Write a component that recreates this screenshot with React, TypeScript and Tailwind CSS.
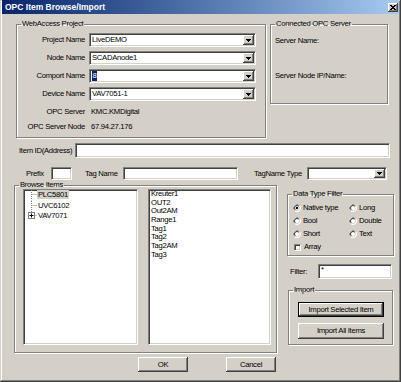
import React from "react";

const SUNKEN =
  "bg-white border border-t-[#808080] border-l-[#808080] border-b-white border-r-white shadow-[inset_1px_1px_#404040,inset_-1px_-1px_#d4d0c8]";
const BTN =
  "bg-[#d4d0c8] shadow-[inset_-1px_-1px_#404040,inset_1px_1px_#fff,inset_-2px_-2px_#808080]";
const GROUP =
  "border border-[#808080] shadow-[inset_1px_1px_#fff,1px_1px_#fff]";

function Arrow() {
  return (
    <svg width="5" height="3" viewBox="0 0 5 3" shapeRendering="crispEdges">
      <path d="M0 0h5v1h-1v1h-1v1h-1v-1h-1v-1h-1z" fill="#000" />
    </svg>
  );
}

function Combo({ className, children }: { className: string; children?: React.ReactNode }) {
  return (
    <div className={`${SUNKEN} ${className} flex items-stretch p-[1px]`}>
      <div className="flex-1 flex items-center pl-[1px] overflow-hidden whitespace-nowrap">{children}</div>
      <div className={`${BTN} w-[11px] flex items-center justify-center`}>
        <Arrow />
      </div>
    </div>
  );
}

function Radio({ checked }: { checked?: boolean }) {
  return (
    <svg width="8" height="8" viewBox="0 0 8 8" className="shrink-0">
      <circle cx="4" cy="4" r="3.5" fill="#fff" stroke="#ffffff" strokeWidth="1" />
      <path d="M1.53 6.47A3.5 3.5 0 0 1 6.47 1.53" fill="none" stroke="#808080" strokeWidth="1" />
      <circle cx="4" cy="4" r="2.5" fill="#fff" stroke="#d4d0c8" strokeWidth="1" />
      <path d="M2.23 5.77A2.5 2.5 0 0 1 5.77 2.23" fill="none" stroke="#404040" strokeWidth="1" />
      {checked && <circle cx="4" cy="4" r="1.2" fill="#000" />}
    </svg>
  );
}

function TreeRow({
  label,
  last,
  plus,
  selected,
}: {
  label: string;
  last?: boolean;
  plus?: boolean;
  selected?: boolean;
}) {
  return (
    <div className="flex h-[10.5px] items-start">
      <svg width="13" height="10.5" viewBox="0 0 13 10.5" className="shrink-0">
        <line x1="7.5" y1="0" x2="7.5" y2={last ? 4.5 : 10.5} stroke="#808080" strokeDasharray="1 1" />
        <line x1="7.5" y1="4.5" x2="13" y2="4.5" stroke="#808080" strokeDasharray="1 1" />
        {plus && (
          <>
            <rect x="4.5" y="1.5" width="6" height="6" fill="#fff" stroke="#808080" />
            <path d="M5.5 4.5h4M7.5 2.5v4" stroke="#000" />
          </>
        )}
      </svg>
      <span className={selected ? "h-[9px] leading-[9px] px-[1px] bg-[#d4d0c8]" : "h-[9px] leading-[9px] px-[1px]"}>
        {label}
      </span>
    </div>
  );
}

function Button({ className, children, isDefault }: { className: string; children: React.ReactNode; isDefault?: boolean }) {
  return (
    <div
      className={
        isDefault
          ? `${className} border border-black bg-[#d4d0c8] shadow-[inset_-1px_-1px_#404040,inset_1px_1px_#fff,inset_-2px_-2px_#808080] flex items-center justify-center whitespace-nowrap`
          : `${className} ${BTN} flex items-center justify-center whitespace-nowrap`
      }
    >
      {children}
    </div>
  );
}

export default function App() {
  const tags = ["Kreuter1", "OUT2", "Out2AM", "Range1", "Tag1", "Tag2", "Tag2AM", "Tag3"];
  return (
    <div className="w-[401px] h-[382px] bg-[#d4d0c8] flex flex-col overflow-hidden text-black text-[7.7px] tracking-[-0.3px] leading-[10px] font-[family-name:'Liberation_Sans',Arial,sans-serif] shadow-[inset_-1px_-1px_#404040,inset_1px_1px_#d4d0c8,inset_-2px_-2px_#808080,inset_2px_2px_#fff]">
      {/* Title bar */}
      <div className="mx-[2px] h-[14px] shrink-0 flex items-center justify-between bg-linear-to-r from-[#0a246a] to-[#a6caf0] pl-[3px] pr-[1px]">
        <span className="text-white font-bold text-[8.5px] tracking-normal">
          OPC Item Browse/Import
        </span>
        <div className={`${BTN} w-[10px] h-[9px] flex items-center justify-center`}>
          <svg width="6" height="5" viewBox="0 0 6 5" shapeRendering="crispEdges">
            <path d="M0 0h2v1h2v-1h2v1h-1v1h-1v1h1v1h1v1h-2v-1h-2v1h-2v-1h1v-1h1v-1h-1v-1h-1z" fill="#000" />
          </svg>
        </div>
      </div>

      {/* Row 1: groups */}
      <div className="flex mt-[6px] shrink-0">
        <fieldset className={`${GROUP} ml-[16px] w-[250px] h-[118px]`}>
          <legend className="ml-[4px] px-[1px] leading-[8px]">WebAccess Project</legend>
          <div className="pt-[5px] grid grid-cols-[68px_167px] gap-x-[4px] gap-y-[4px] items-center">
            <span className="text-right whitespace-nowrap">Project Name</span>
            <Combo className="w-[167px] h-[14px]">LiveDEMO</Combo>
            <span className="text-right whitespace-nowrap">Node Name</span>
            <Combo className="w-[167px] h-[14px]">SCADAnode1</Combo>
            <span className="text-right whitespace-nowrap">Comport Name</span>
            <Combo className="w-[167px] h-[14px]">
              <span className="bg-[#0a246a] text-white px-[0.5px]">8</span>
            </Combo>
            <span className="text-right whitespace-nowrap">Device Name</span>
            <Combo className="w-[167px] h-[14px]">VAV7051-1</Combo>
          </div>
          <div className="mt-[6px] grid grid-cols-[68px_auto] gap-x-[6px]">
            <span className="text-right whitespace-nowrap">OPC Server</span>
            <span>KMC.KMDigital</span>
          </div>
          <div className="mt-[5px] grid grid-cols-[68px_auto] gap-x-[6px]">
            <span className="text-right whitespace-nowrap">OPC Server Node</span>
            <span>67.94.27.176</span>
          </div>
        </fieldset>

        <fieldset className={`${GROUP} ml-[4px] w-[118px] h-[84px]`}>
          <legend className="ml-[4px] px-[1px] leading-[8px]">Connected OPC Server</legend>
          <div className="pl-[4px] pt-[8px] flex flex-col">
            <span>Server Name:</span>
            <span className="mt-[25px]">Server Node IP/Name:</span>
          </div>
        </fieldset>
      </div>

      {/* Row 2: Item ID */}
      <div className="flex items-center mt-[5px] shrink-0">
        <span className="ml-[19px] w-[56px] whitespace-nowrap">Item ID(Address)</span>
        <div className={`${SUNKEN} w-[315px] h-[15px]`} />
      </div>

      {/* Row 3: prefix / tag name */}
      <div className="flex items-center mt-[9px] h-[13px] shrink-0">
        <span className="ml-[26px] w-[25px]">Prefix</span>
        <div className={`${SUNKEN} w-[21px] h-[13px]`} />
        <span className="ml-[13px] w-[38px] whitespace-nowrap">Tag Name</span>
        <div className={`${SUNKEN} w-[115px] h-[13px]`} />
        <span className="ml-[16px] w-[53px] whitespace-nowrap">TagName Type</span>
        <Combo className="w-[80px] h-[13px]" />
      </div>

      {/* Row 4 */}
      <div className="flex mt-[1px] shrink-0">
        <fieldset className={`${GROUP} ml-[14px] w-[263px] h-[172px]`}>
          <legend className="ml-[4px] px-[1px] leading-[8px]">Browse Items</legend>
          <div className="flex">
            <div className={`${SUNKEN} ml-[8px] w-[115px] h-[156px] flex flex-col`}>
              <TreeRow label="PLC5801" selected />
              <TreeRow label="UVC6102" />
              <TreeRow label="VAV7071" last plus />
            </div>
            <div className={`${SUNKEN} ml-[10px] w-[123px] h-[156px] pl-[2px] flex flex-col leading-[8.7px]`}>
              {tags.map((t) => (
                <span key={t} className="h-[8.7px] leading-[8.7px] whitespace-nowrap">
                  {t}
                </span>
              ))}
            </div>
          </div>
        </fieldset>

        <div className="ml-[10px] w-[107px] flex flex-col">
          <fieldset className={`${GROUP} mt-[9px] w-[107px] h-[66px]`}>
            <legend className="ml-[4px] px-[1px] leading-[8px]">Data Type Filter</legend>
            <div className="pl-[5px] pt-[5px] grid grid-cols-[56px_auto] auto-rows-[10px] gap-y-[3px]">
              <div className="flex items-center gap-[2px]"><Radio checked /><span className="whitespace-nowrap">Native type</span></div>
              <div className="flex items-center gap-[2px]"><Radio /><span>Long</span></div>
              <div className="flex items-center gap-[2px]"><Radio /><span>Bool</span></div>
              <div className="flex items-center gap-[2px]"><Radio /><span>Double</span></div>
              <div className="flex items-center gap-[2px]"><Radio /><span>Short</span></div>
              <div className="flex items-center gap-[2px]"><Radio /><span>Text</span></div>
              <div className="flex items-center gap-[3px] pl-[1px]">
                <div className={`${SUNKEN} w-[7px] h-[7px] shrink-0`} />
                <span>Array</span>
              </div>
            </div>
          </fieldset>

          <div className="flex items-center mt-[8px] h-[15px]">
            <span className="ml-[3px] w-[28px]">Filter:</span>
            <div className={`${SUNKEN} w-[74px] h-[15px] pl-[2px] leading-[10px]`}>*</div>
          </div>

          <fieldset className={`${GROUP} ml-[1px] mt-[7px] w-[105px] h-[59px]`}>
            <legend className="ml-[4px] px-[1px] leading-[8px]">Import</legend>
            <div className="pl-[9px] pt-[8px] flex flex-col">
              <Button className="w-[86px] h-[15px]" isDefault>Import Selected Item</Button>
              <Button className="w-[86px] h-[16px] mt-[6px]">Import All Items</Button>
            </div>
          </fieldset>
        </div>
      </div>

      {/* Row 5 */}
      <div className="flex mt-[4px] shrink-0">
        <Button className="ml-[138px] w-[50px] h-[15px]">OK</Button>
        <Button className="ml-[38px] w-[50px] h-[15px]">Cancel</Button>
      </div>
    </div>
  );
}
